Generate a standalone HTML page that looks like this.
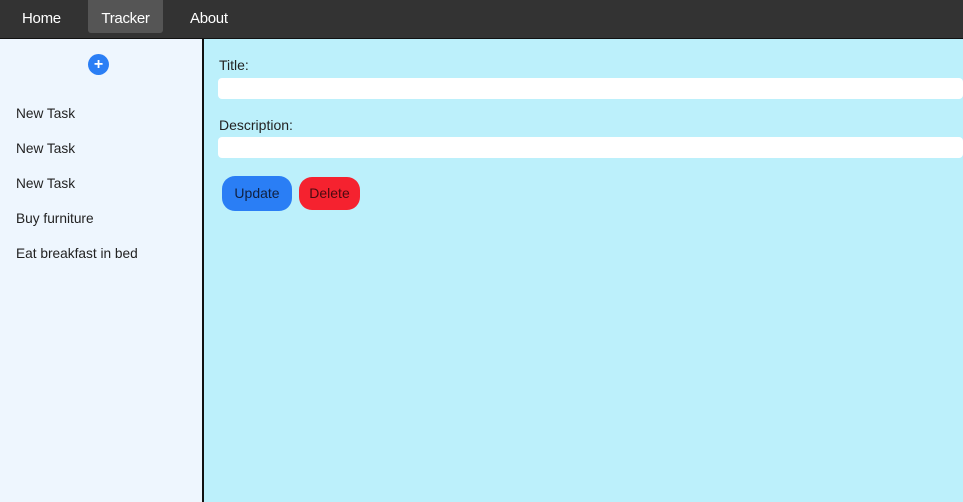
<!DOCTYPE html>
<html><head><style>
body{margin:0;width:963px;height:502px;overflow:hidden;font-family:"Liberation Sans",sans-serif;}
.nav{height:38px;background:#333;position:relative;border-bottom:1px solid #111}
.nav span{position:absolute;top:0;height:33px;line-height:33px;padding-top:0;color:#fff;font-size:15px;letter-spacing:-0.3px}
.nav span.t{top:2px}
.side{position:absolute;left:0;top:39px;width:202px;height:463px;background:#eef6fe;border-right:2px solid #111}
.main{position:absolute;left:204px;top:39px;right:0;height:463px;background:#bcf0fb}
.item{position:absolute;left:16px;font-size:13.7px;color:#222}
.lbl{position:absolute;left:15px;font-size:14px;color:#222}
.inp{position:absolute;left:14px;right:0;height:21px;background:#fff;border-radius:4px}
.btn{position:absolute;top:137px;height:35px;line-height:35px;text-align:center;font-size:14px;border-radius:13px}
</style></head><body>
<div class="nav">
<span class="t" style="left:22px">Home</span>
<span style="left:88px;width:75px;background:#555;border-radius:0 0 3px 3px;text-align:center;line-height:37px;height:33px">Tracker</span>
<span class="t" style="left:190px">About</span>
</div>
<div class="side">
<div style="position:absolute;left:88px;top:15px;width:21px;height:21px;border-radius:50%;background:#2a7ef5;color:#fff;text-align:center;line-height:21px;font-weight:bold;font-size:16px">+</div>
<div class="item" style="top:67px">New Task</div>
<div class="item" style="top:102px">New Task</div>
<div class="item" style="top:137px">New Task</div>
<div class="item" style="top:172px">Buy furniture</div>
<div class="item" style="top:207px">Eat breakfast in bed</div>
</div>
<div class="main">
<div class="lbl" style="top:18px">Title:</div>
<div class="inp" style="top:39px"></div>
<div class="lbl" style="top:78px">Description:</div>
<div class="inp" style="top:98px"></div>
<div class="btn" style="left:18px;width:70px;background:#2a7ef5;color:#102040">Update</div>
<div class="btn" style="left:95px;width:61px;height:33px;line-height:33px;top:138px;background:#f5222f;color:#4a0a10">Delete</div>
</div>
</body></html>
